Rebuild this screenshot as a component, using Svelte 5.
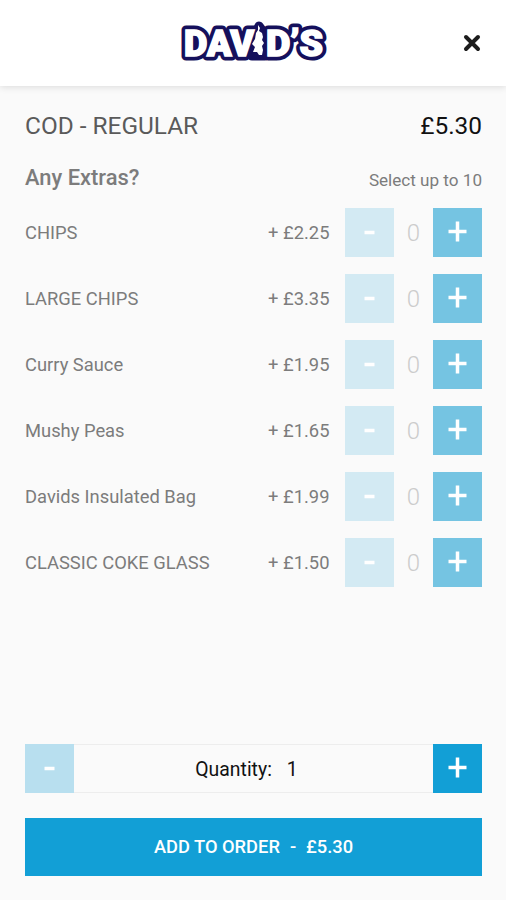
<script lang="ts">
	type Extra = { name: string; price: number; count: number };

	const basePrice = 5.3;
	const maxExtras = 10;

	let extras: Extra[] = [
		{ name: 'CHIPS', price: 2.25, count: 0 },
		{ name: 'LARGE CHIPS', price: 3.35, count: 0 },
		{ name: 'Curry Sauce', price: 1.95, count: 0 },
		{ name: 'Mushy Peas', price: 1.65, count: 0 },
		{ name: 'Davids Insulated Bag', price: 1.99, count: 0 },
		{ name: 'CLASSIC COKE GLASS', price: 1.5, count: 0 },
	];
	let quantity = 1;

	$: selected = extras.reduce((sum, extra) => sum + extra.count, 0);
	$: itemPrice = extras.reduce((sum, extra) => sum + extra.price * extra.count, basePrice);
	$: total = itemPrice * quantity;

	function changeExtra(index: number, step: number) {
		if (step > 0 && selected >= maxExtras) {
			return;
		}
		extras[index].count = Math.max(0, extras[index].count + step);
	}

	function changeQuantity(step: number) {
		quantity = Math.max(1, quantity + step);
	}
</script>

<div class="screen">
	<header>
		<!-- The letters are white over a thick navy outline; a figure stands in for the I -->
		<svg class="logo" viewBox="0 0 150 70" role="img" aria-label="David's">
			<g class="outline">
				<text x="5" y="47.5" textLength="70" lengthAdjust="spacingAndGlyphs">DAV</text>
				<path d="M80 18l3 4 3 6v20H73l-1-14z" />
				<text x="87" y="47.5" textLength="57" lengthAdjust="spacingAndGlyphs">D’S</text>
			</g>
			<g class="letters">
				<text x="5" y="47.5" textLength="70" lengthAdjust="spacingAndGlyphs">DAV</text>
				<text x="87" y="47.5" textLength="57" lengthAdjust="spacingAndGlyphs">D’S</text>
			</g>
			<path
				class="figure"
				d="M79 17l2 3-1 3 3 2 1 4-1 3 2 3-2 3 1 4-1 5h-3l-2-3h-4l2-5-3-3 3-5 1-6 2-3z"
			/>
		</svg>
		<button type="button" class="close" aria-label="Close">
			<svg viewBox="0 0 18 18"><path d="M3 3l12 12M15 3L3 15" /></svg>
		</button>
	</header>

	<main>
		<div class="title">
			<h1>COD - REGULAR</h1>
			<span>£{basePrice.toFixed(2)}</span>
		</div>
		<div class="group">
			<h2>Any Extras?</h2>
			<span>Select up to {maxExtras}</span>
		</div>
		<ul>
			{#each extras as extra, i}
				<li>
					<span class="name">{extra.name}</span>
					<span class="price">+ £{extra.price.toFixed(2)}</span>
					<button
						type="button"
						class="step"
						class:off={extra.count === 0}
						aria-label="Remove {extra.name}"
						on:click={() => changeExtra(i, -1)}
					>
						<svg viewBox="0 0 49 49"><path d="M19.5 24.5h10" /></svg>
					</button>
					<span class="count">{extra.count}</span>
					<button
						type="button"
						class="step"
						aria-label="Add {extra.name}"
						on:click={() => changeExtra(i, 1)}
					>
						<svg viewBox="0 0 49 49"><path d="M15.5 23.5h18M24.5 13.5v20" /></svg>
					</button>
				</li>
			{/each}
		</ul>
	</main>

	<footer>
		<div class="quantity">
			<button
				type="button"
				class="step"
				class:off={quantity === 1}
				aria-label="Decrease quantity"
				on:click={() => changeQuantity(-1)}
			>
				<svg viewBox="0 0 49 49"><path d="M19.5 24.5h10" /></svg>
			</button>
			<div class="value"><span>Quantity:</span><span>{quantity}</span></div>
			<button
				type="button"
				class="step"
				aria-label="Increase quantity"
				on:click={() => changeQuantity(1)}
			>
				<svg viewBox="0 0 49 49"><path d="M15.5 23.5h18M24.5 13.5v20" /></svg>
			</button>
		</div>
		<button type="button" class="order">
			<span>ADD TO ORDER</span><span>-</span><span>£{total.toFixed(2)}</span>
		</button>
	</footer>
</div>

<style>
	:global(body) {
		background-color: #fafafa;
	}

	.screen {
		box-sizing: border-box;
		display: flex;
		flex-direction: column;
		height: 900px;
		padding-bottom: 24px;
		font-family: Roboto, 'Liberation Sans', sans-serif;
		color: #7c7c7c;
		background-color: #fafafa;
	}

	button {
		padding: 0;
		font: inherit;
		cursor: pointer;
		border: 0;
	}

	header {
		display: grid;
		flex: none;
		grid-template-columns: 1fr 150px 1fr;
		align-items: center;
		height: 86px;
		padding: 0 25px;
		background-color: #fff;
		box-shadow: 0 1px 7px rgb(0 0 0 / 13%);
	}

	.logo {
		grid-column: 2;
		width: 150px;
		height: 70px;
		margin-left: 1px;
		font-size: 36.5px;
		font-weight: 900;
	}

	.outline {
		fill: #15105c;
		stroke: #15105c;
		stroke-linejoin: round;
		stroke-width: 9px;
	}

	.letters {
		fill: #fff;
		stroke: #fff;
		stroke-width: 1.6px;
	}

	.figure {
		fill: #fff;
	}

	.close {
		justify-self: end;
		width: 18px;
		height: 18px;
		background: none;
	}

	.close svg {
		display: block;
		fill: none;
		stroke: #1c1c1c;
		stroke-linecap: round;
		stroke-width: 4px;
	}

	main {
		flex: 1;
		padding: 23px 24px 0 25px;
	}

	.title,
	.group {
		display: flex;
		align-items: center;
		justify-content: space-between;
	}

	.title {
		height: 32px;
		font-size: 24.4px;
		color: #111;
	}

	h1 {
		margin: 0;
		font-size: inherit;
		font-weight: 400;
		color: #5a5a5a;
	}

	.group {
		height: 32px;
		margin-top: 20px;
		font-size: 17.1px;
	}

	.group span {
		padding-top: 5px;
	}

	h2 {
		margin: 0;
		font-size: 21.9px;
		font-weight: 500;
	}

	ul {
		display: flex;
		flex-direction: column;
		gap: 17px;
		padding: 0;
		margin: 15px 0 0;
		list-style: none;
	}

	li {
		display: flex;
		align-items: center;
		font-size: 18.35px;
	}

	.name {
		flex: 1;
	}

	.price {
		margin-right: 15.5px;
	}

	.count {
		width: 39px;
		font-size: 24px;
		font-weight: 300;
		color: #ccc;
		text-align: center;
	}

	.step {
		flex: none;
		width: 49px;
		height: 49px;
		background-color: #75c4e2;
	}

	.step svg {
		display: block;
		fill: none;
		stroke: #fff;
		stroke-width: 3.5px;
	}

	.step.off {
		background-color: #d3eaf3;
	}

	.quantity .step {
		background-color: #129fd6;
	}

	.quantity .step.off {
		background-color: #b8dfef;
	}

	footer {
		padding: 0 24px 0 25px;
	}

	.quantity {
		display: flex;
		margin-bottom: 25px;
	}

	.value {
		box-sizing: border-box;
		display: flex;
		flex: 1;
		gap: 15px;
		align-items: center;
		justify-content: center;
		padding: 2px 14px 0 0;
		font-size: 19.4px;
		color: #111;
		border: solid #ededed;
		border-width: 1px 0;
	}

	.order {
		display: flex;
		gap: 10px;
		align-items: center;
		justify-content: center;
		width: 100%;
		height: 58px;
		padding-bottom: 2px;
		font-size: 18.3px;
		font-weight: 500;
		color: #fff;
		background-color: #129fd6;
	}
</style>
